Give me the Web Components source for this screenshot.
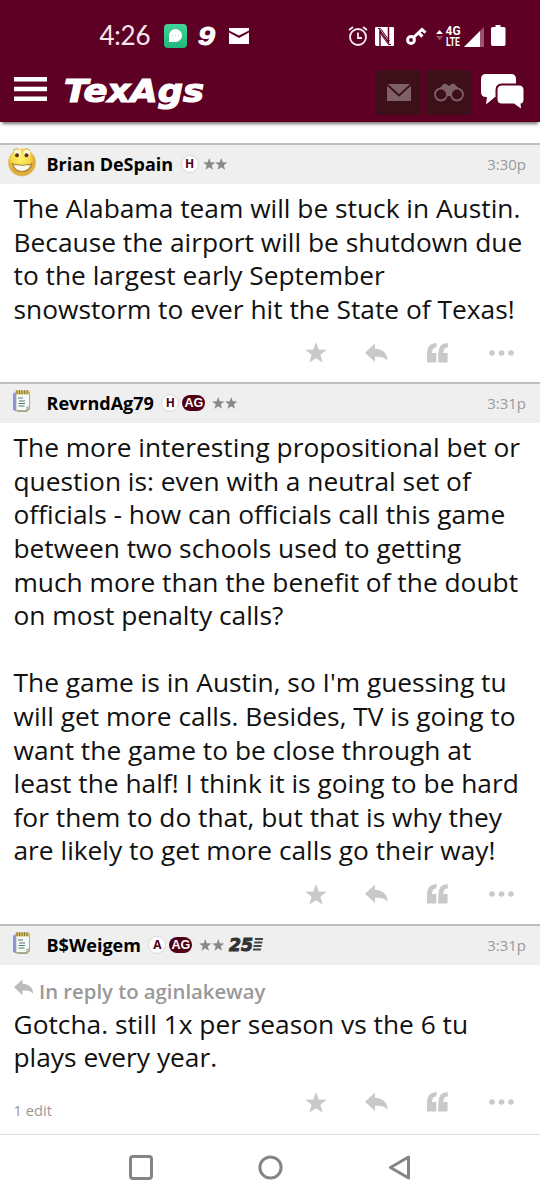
<!DOCTYPE html>
<html lang="en"><head><meta charset="utf-8"><title>TexAgs</title>
<style>html,body{margin:0;background:#fff}body{width:540px;height:1200px;overflow:hidden;font-family:"Open Sans",sans-serif}</style></head>
<body>
<tex-app></tex-app>
<script>
const icons = {
  star: '<svg width="22" height="21" viewBox="0 0 22 21"><path d="M11 0l2.7 7.4 8 .3-6.3 5 2.2 7.8L11 16.2l-6.6 4.3 2.2-7.8-6.3-5 8-.3z"/></svg>',
  reply: '<svg width="23" height="20" viewBox="0 0 23 20"><path d="M0 9.8L10 .5v5.2C18 6 22.5 10.500 22.500 17.500 19 13.800 15.500 13.500 10 13.700v5.300z"/></svg>',
  quote: '<svg width="21" height="20" viewBox="0 0 21 20"><path d="M0 19.500V10.500Q0 1 7.500 0.200L9.500 0V4.300Q5 4.500 5 10H9.300V19.500Z"/><path d="M11.300 19.500V10.500Q11.300 1 18.800 0.200L20.800 0V4.300Q16.300 4.500 16.300 10H20.600V19.500Z"/></svg>',
  more: '<svg width="25" height="6" viewBox="0 0 25 6"><circle cx="3" cy="3" r="2.800"/><circle cx="12.500" cy="3" r="2.800"/><circle cx="22" cy="3" r="2.800"/></svg>',
  grin: '<svg width="30" height="30" viewBox="0 0 30 30" style="margin:2px 0 0 6.500px"><defs><radialGradient id="g" cx=".45" cy=".35"><stop stop-color="#fff36c"/><stop offset=".7" stop-color="#f9d645"/><stop offset="1" stop-color="#e0ac3a"/></radialGradient></defs><circle cx="15" cy="15.500" r="13.600" fill="url(#g)" stroke="#dcb565" stroke-width=".6"/><ellipse cx="10.500" cy="5.500" rx="3.200" ry="4.500" fill="#fff8d8"/><ellipse cx="20" cy="5.500" rx="3.200" ry="4.500" fill="#fff8d8"/><path d="M6 4q3-4 6-1M17 3q4-3 6 1" fill="none" stroke="#d49a2c"/><ellipse cx="10" cy="8.200" rx="2" ry="2" fill="#59320f"/><ellipse cx="19.500" cy="8.200" rx="2" ry="2" fill="#59320f"/><path d="M5 16Q6 18 9 17.500 15 19 21 17.500 25 18 25 16 23 24.500 15 24.500 7 24.500 5 16Z" fill="#fffdf0" stroke="#a98435" stroke-width="1.200"/></svg>',
  note: '<svg width="20" height="24" viewBox="0 0 20 24" style="margin:5px 0 0 12px"><path d="M2 4v17l4 2h9l3-3V4" fill="#a9a684"/><path d="M3 3L1 5v16l3 1" fill="#8f93dc"/><path d="M4 3h13.500v15l-2.800 3.500H4z" fill="#f4faf8" stroke="#9c9d88" stroke-width=".7"/><path d="M14.700 21v-3h2.500" fill="#d5d9c4" stroke="#8d8d70" stroke-width=".6"/><path d="M3.500 1.500h14v4h-14z" fill="#d5bd65"/><path d="M5 1v4M7.500 1v4M10 1v4M12.500 1v4M15 1v4" stroke="#736330" stroke-width=".8"/><path d="M6 9h5M7 12h6M6.500 14.500h6.500M6.500 17h6" stroke="#557776" stroke-width="1.100"/></svg>'
};
function define(name, css, markup) {
  customElements.define(name, class extends HTMLElement {
    connectedCallback() {
      const root = this.attachShadow({mode: 'open'});
      root.innerHTML = `<style>*{box-sizing:border-box}svg{display:block;flex:none}${css}</style>${typeof markup === 'function' ? markup(this) : markup}`;
    }
  });
}
define('status-bar', `:host{display:flex;align-items:flex-start;height:62px;color:#fff;padding-top:20px}svg{overflow:visible}.net{display:block;margin:6px 0 0 2px;width:15px;font:700 12px/10.500px Roboto,sans-serif}.net span{display:block;height:10.500px;transform-origin:0 50%;white-space:pre}`,
`<svg width="51" height="30" style="margin-left:99px"><text x="0.500" y="25.200" font-family="Lato" font-size="26" fill="#f5e8ed" textLength="51">4:26</text></svg>
<svg width="23" height="24" style="margin:4px 0 0 14px"><defs><linearGradient id="m" x2="0" y2="1"><stop stop-color="#42d39a"/><stop offset="1" stop-color="#20b87c"/></linearGradient></defs><rect width="23" height="24" rx="4" fill="url(#m)"/><circle cx="11.500" cy="11.500" r="6.500" fill="#fff"/><path d="M5 11v7h7z" fill="#fff"/><path d="M8 11.500h1M11 11.500h1M14 11.500h1" stroke="#8adfbd"/></svg>
<svg width="18" height="25" style="margin-left:11px"><text x="0" y="25" font-family="Liberation Sans" font-weight="700" font-style="italic" font-size="26" fill="#fff" stroke="#fff" stroke-width=".8" textLength="17" lengthAdjust="spacingAndGlyphs">9</text></svg>
<svg width="20" height="16" style="margin:8px 0 0 12.500px" fill="#fff"><path d="M0 0h20v2.500L10 7.500 0 2.500zM0 4.500L10 10 20 4.500V16H0z"/></svg>
<svg width="20" height="20" viewBox="0 0 20 20" style="margin:6px 0 0 99px" fill="none" stroke="#f6edf1" stroke-width="1.800"><circle cx="10" cy="11" r="8"/><path d="M1 4l4-3M19 4l-4-3M10 6.500V12h4"/></svg>
<svg width="20" height="19" viewBox="0 0 20 19" style="margin:7px 0 0 7.500px"><path d="M2 0H18Q19 0 19 1V18Q19 19 18 19H2Q0 19 0 17V1Q0 0 2 0" fill="#fff"/><path d="M5 19V3.500L13.500 15.500V0" fill="none" stroke="#5d0023" stroke-width="1.500"/><path d="M3 1.500H5.500L14.500 14M4.500 5L13.500 17.500H16" fill="none" stroke="#5d0023" stroke-width="1"/></svg>
<svg width="20" height="19" viewBox="0 0 20 19" style="margin:7px 0 0 11px" fill="none" stroke="#fff"><circle cx="5" cy="13" r="3.400" stroke-width="3"/><path d="M7.500 10.500L17 1.500M12.500 6l4 3.500M16 2.500l3.500 3.200" stroke-width="3"/></svg>
<svg width="8" height="11" style="margin:10px 0 0 9.500px"><path d="M0 4L3.500 0 7 4z" fill="#fff"/><path d="M0 6L3.500 10.500 7 6z" fill="#94506a"/></svg>
<div class="net"><span style="transform:scaleX(1)">4G</span><span style="transform:scaleX(.72)">LTE</span></div>
<svg width="20" height="20" style="margin:6.500px 0 0 3px"><path d="M20 0V20H0z" fill="#995570"/><path d="M16 4V20H0z" fill="#fff"/></svg>
<svg width="15" height="21" style="margin:5px 0 0 7.500px"><path d="M4.500 0h5v2H13q1.500 0 1.500 1.500V19q0 2-1.500 2H1.500Q0 21 0 19V3.500Q0 2 1.500 2h3z" fill="#fff"/></svg>`);
define('site-nav', `:host{display:flex;height:60px;align-items:flex-start}.sq{width:45px;height:45px;background:#3d0f19;border-radius:3px;display:grid;place-items:center}svg{overflow:visible}`,
`<svg width="33" height="24" style="margin:15px 0 0 13.500px" fill="#fff"><path d="M0 0h33v4.500H0zM0 9.800h33v4.500H0zM0 19.600h33v4.500H0z"/></svg>
<svg width="140" height="34" style="margin:12px 0 0 17.500px"><text x="0" y="27.500" font-family="DejaVu Sans" font-weight="700" font-style="italic" font-size="32" fill="#fff" stroke="#fff" stroke-width="1.200" textLength="140" lengthAdjust="spacingAndGlyphs">TexAgs</text></svg>
<div class="sq" style="margin:8px 0 0 172px"><svg width="24" height="17"><path d="M0 0h24v17H0z" fill="#806068"/><path d="M0 .5l12 11 12-11" fill="none" stroke="#3d0f19" stroke-width="1.800"/></svg></div>
<div class="sq" style="margin:8px 0 0 5px"><svg width="30" height="19" viewBox="0 0 30 19"><path d="M5 6L9 1.500Q11 0 13 1.500L15 3l2-1.500Q19 0 21 1.500L25 6 18 13h-6z" fill="#806068"/><circle cx="7" cy="11.500" r="6" fill="#3d0f19" stroke="#806068" stroke-width="1.800"/><circle cx="23" cy="11.500" r="6" fill="#3d0f19" stroke="#806068" stroke-width="1.800"/></svg></div>
<svg width="43" height="35" viewBox="0 0 43 35" style="margin:12px 0 0 9.500px"><path d="M5 0H30Q35 0 35 5V18Q35 23 30 23H14L5 30.500 6 23H5Q0 23 0 18V5Q0 0 5 0" fill="#fff"/><path d="M21 11.500H38Q42.500 11.500 42.500 16V25Q42.500 29.500 39.500 29.500L40 34.500 33 29.500H21Q16.500 29.500 16.500 25V16Q16.500 11.500 21 11.500" fill="#fff" stroke="#5d0023" stroke-width="4" paint-order="stroke"/></svg>`);
define('user-badge', `:host{display:inline-flex;flex:none;width:18px;height:18px;border-radius:9px;background:#fff;border:1px solid #d8d8d8;color:#500014;align-items:center;justify-content:center;font:700 12px/16px "Open Sans",sans-serif}:host([kind=ag]){width:23px;height:16px;background:#500014;border:0;color:#fff;font:700 12.500px/16px "Liberation Sans",sans-serif}`, '<slot></slot>');
define('star-rank', `:host{display:flex}`, ('<svg width="12.500" height="12" viewBox="0 0 22 21" fill="#898989"><path d="M11 0l2.700 7.400 8 .3-6.300 5 2.200 7.800L11 16.200l-6.600 4.300 2.200-7.800-6.300-5 8-.3z"/></svg>').repeat(2));
define('rank-25', `:host{display:block}svg{overflow:visible}`, `<svg width="35" height="15" viewBox="0 0 35 15"><text x="0" y="14" font-family="DejaVu Sans" font-weight="700" font-style="italic" font-size="18" fill="#333" stroke="#333" stroke-width="1" textLength="24" lengthAdjust="spacingAndGlyphs">25</text><path d="M26 2h8M25.300 5.500h8M24.600 9h8M23.900 12.500h8" stroke="#444" stroke-width="2.200"/></svg>`);
define('post-actions', `:host{display:flex;height:21px;align-items:center;fill:#c9c9c9;padding-left:305px}`,
`${icons.star}<div style="width:38px"></div>${icons.reply}<div style="width:38.500px"></div>${icons.quote}<div style="width:41.500px"></div>${icons.more}`);
define('forum-post', `:host{display:block}header{height:41px;border-top:2px solid #bfbfbf;background:#efefef;display:flex;align-items:center}.av{width:46.500px;flex:none;align-self:flex-start}b{font-size:18px;white-space:pre;margin:-1.500px 7.500px 0 0}.meta{display:flex;align-items:center;gap:3px;flex:1;margin-top:-1px}time{font-size:15px;color:#999;margin:-1px 14px 0 0}.body{padding:8px 0 0 13.500px;font-size:26.320px;line-height:33.600px;color:#111;white-space:pre}`,
el => `<header><div class="av">${icons[el.getAttribute('avatar')]}</div><b>${el.getAttribute('author')}</b><div class="meta"><slot name="meta"></slot></div><time>${el.getAttribute('time')}</time></header><div class="body"><slot></slot></div><slot name="foot"></slot>`);
define('text-line', `:host{display:block;height:33.600px;white-space:pre}`, '<slot></slot>');
define('reply-ref', `:host{display:flex;height:35px;align-items:center;color:#999;font:600 20.300px/35px "Open Sans",sans-serif;padding-top:2px}svg{fill:#bbb;margin-right:6px;margin-top:-7px}`, `<svg width="19.500" height="17" viewBox="0 0 23 20"><path d="M0 9.800L10 .5v5.200C18 6 22.500 10.500 22.500 17.500 19 13.800 15.500 13.500 10 13.700v5.300z"/></svg><slot></slot>`);
define('system-nav', `:host{display:flex;height:65px;border-top:1.500px solid #ddd;padding:20px 0 0 129px;align-items:flex-start}`,
`<svg width="24" height="25" fill="none" stroke="#858585" stroke-width="3"><rect x="1.500" y="1.500" width="21" height="22" rx="2.500"/></svg><svg width="25" height="25" style="margin-left:104.500px" fill="none" stroke="#858585" stroke-width="3"><circle cx="12.500" cy="12.500" r="10.600"/></svg><svg width="23" height="25" style="margin-left:105px" fill="none" stroke="#858585" stroke-width="3" stroke-linejoin="round"><path d="M20.500 2v21L2.500 12.500z"/></svg>`);
define('tex-app', `:host{display:flex;flex-direction:column;height:1200px;background:#fff}.top{height:122px;background:#5d0023;box-shadow:0 4px 3px -2px #0008;flex:none}.feed{padding-top:21.300px;height:1012px;flex:none;overflow:hidden}.foot{display:flex;align-items:flex-start;height:50px;padding:12px 0 0 13.500px}.edit{font-size:14.700px;line-height:20px;color:#999;width:291.500px;padding-top:13px}.foot post-actions{padding-left:0}`,
`<div class="top"><status-bar></status-bar><site-nav></site-nav></div>
<main class="feed">
<forum-post avatar="grin" author="Brian DeSpain" time="3:30p" style="height:239px"><user-badge slot="meta">H</user-badge><star-rank slot="meta" style="margin-left:1px"></star-rank><text-line>The Alabama team will be stuck in Austin.</text-line><text-line>Because the airport will be shutdown due</text-line><text-line>to the largest early September</text-line><text-line>snowstorm to ever hit the State of Texas!</text-line><post-actions slot="foot" style="margin-top:15.500px"></post-actions></forum-post>
<forum-post avatar="note" author="RevrndAg79" time="3:31p" style="height:541.500px"><user-badge slot="meta">H</user-badge><user-badge kind="ag" slot="meta">AG</user-badge><star-rank slot="meta" style="margin-left:4px"></star-rank><text-line>The more interesting propositional bet or</text-line><text-line>question is: even with a neutral set of</text-line><text-line>officials - how can officials call this game</text-line><text-line>between two schools used to getting</text-line><text-line>much more than the benefit of the doubt</text-line><text-line>on most penalty calls?</text-line><text-line></text-line><text-line>The game is in Austin, so I'm guessing tu</text-line><text-line>will get more calls. Besides, TV is going to</text-line><text-line>want the game to be close through at</text-line><text-line>least the half! I think it is going to be hard</text-line><text-line>for them to do that, but that is why they</text-line><text-line>are likely to get more calls go their way!</text-line><post-actions slot="foot" style="margin-top:15.500px"></post-actions></forum-post>
<forum-post avatar="note" author="B$Weigem" time="3:31p"><user-badge slot="meta">A</user-badge><user-badge kind="ag" slot="meta">AG</user-badge><star-rank slot="meta" style="margin-left:4px"></star-rank><rank-25 slot="meta" style="margin-left:2px"></rank-25><reply-ref>In reply to aginlakeway</reply-ref><text-line>Gotcha. still 1x per season vs the 6 tu</text-line><text-line>plays every year.</text-line><div class="foot" slot="foot"><span class="edit">1 edit</span><post-actions style="margin-top:5px"></post-actions></div></forum-post>
</main><system-nav></system-nav>`);
</script></body></html>
